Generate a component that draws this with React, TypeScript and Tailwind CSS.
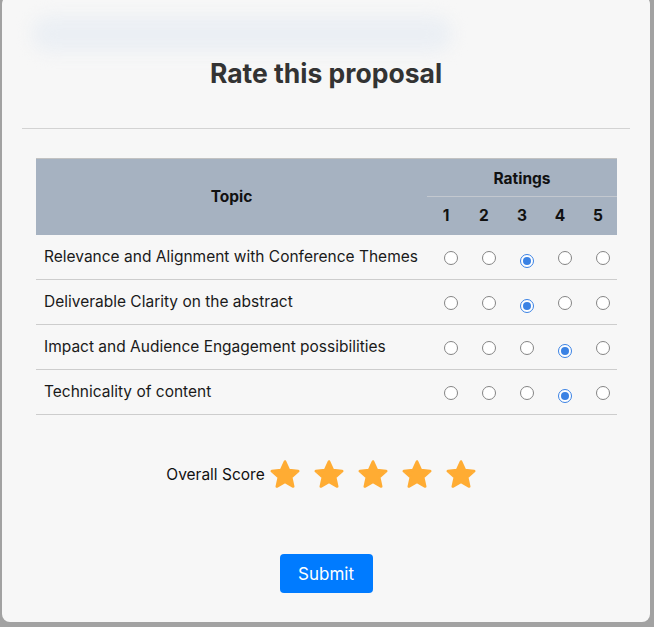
const topics = [
  { label: "Relevance and Alignment with Conference Themes", value: 3 },
  { label: "Deliverable Clarity on the abstract", value: 3 },
  { label: "Impact and Audience Engagement possibilities", value: 4 },
  { label: "Technicality of content", value: 4 },
];

function Radio({ checked }: { checked: boolean }) {
  return (
    <span
      className={
        checked
          ? "inline-flex w-[14px] h-[14px] rounded-full border border-[#3a82e4] bg-white items-center justify-center"
          : "inline-flex w-[14px] h-[14px] rounded-full border border-[#858585] bg-white"
      }
    >
      {checked && <span className="w-[8px] h-[8px] rounded-full bg-[#3a82e4]" />}
    </span>
  );
}

function Star() {
  return (
    <svg width="32" height="31" viewBox="0 0 32 31" className="block">
      <path
        d="M16 2.5 L19.9 11.1 L29.2 12 L22.2 18.3 L24.2 27.5 L16 22.8 L7.8 27.5 L9.8 18.3 L2.8 12 L12.1 11.1 Z"
        fill="#ffac33"
        stroke="#ffac33"
        strokeWidth="2.6"
        strokeLinejoin="round"
      />
    </svg>
  );
}

export default function App() {
  return (
    <div
      className="w-[654px] h-[627px] bg-[#a2a2a2] overflow-hidden"
      style={{ fontFamily: "Inter, 'Noto Sans', sans-serif" }}
    >
      <div className="ml-[2px] -mt-[4px] w-[648px] h-[626px] bg-[#f7f7f7] rounded-[8px] flex flex-col relative">
        <div className="absolute left-[30px] top-[20px] w-[420px] h-[36px] rounded-full bg-[#ebeff4] blur-[8px]" />
        <h2 className="relative mt-[62px] text-center text-[26.5px] font-bold text-[#333] leading-[30px]">
          Rate this proposal
        </h2>
        <div className="mt-[40px] mx-[20px] h-px bg-[#d3d3d3]" />

        <table className="mt-[29px] ml-[34px] w-[581px] border-collapse text-[#111]">
          <thead>
            <tr className="bg-[#a6b2c1]">
              <th
                rowSpan={2}
                className="w-[391px] text-[15.5px] font-bold border-t border-[#c2c2c2] align-middle"
              >
                Topic
              </th>
              <th
                colSpan={5}
                className="h-[38px] pt-[3px] text-[15.5px] font-bold border-t border-[#c2c2c2] border-b border-b-[#c3c8cf]"
              >
                Ratings
              </th>
            </tr>
            <tr className="bg-[#a6b2c1]">
              {[1, 2, 3, 4, 5].map((n) => (
                <th key={n} className="h-[38px] w-[38px] text-[15.5px] font-bold">
                  {n}
                </th>
              ))}
            </tr>
          </thead>
          <tbody>
            {topics.map((t) => (
              <tr key={t.label} className="border-b border-[#cdcdcd]">
                <td className="h-[45px] pl-[8px] text-[15.5px] text-[#1a1a1a] whitespace-nowrap">
                  {t.label}
                </td>
                {[1, 2, 3, 4, 5].map((n) => (
                  <td key={n} className="text-center pl-[9px] pt-[4px]">
                    <Radio checked={t.value === n} />
                  </td>
                ))}
              </tr>
            ))}
          </tbody>
        </table>

        <div className="mt-[44px] flex items-center justify-center gap-[12px] pr-[9px]">
          <span className="text-[15.5px] text-[#111] mr-[-8px]">Overall Score</span>
          <div className="flex gap-[12px]">
            {[0, 1, 2, 3, 4].map((i) => (
              <Star key={i} />
            ))}
          </div>
        </div>

        <div className="mt-[64px] flex justify-center">
          <button className="w-[93px] h-[39px] pt-[2px] rounded-[4px] bg-[#007bff] text-white text-[17px]">
            Submit
          </button>
        </div>
      </div>
    </div>
  );
}
